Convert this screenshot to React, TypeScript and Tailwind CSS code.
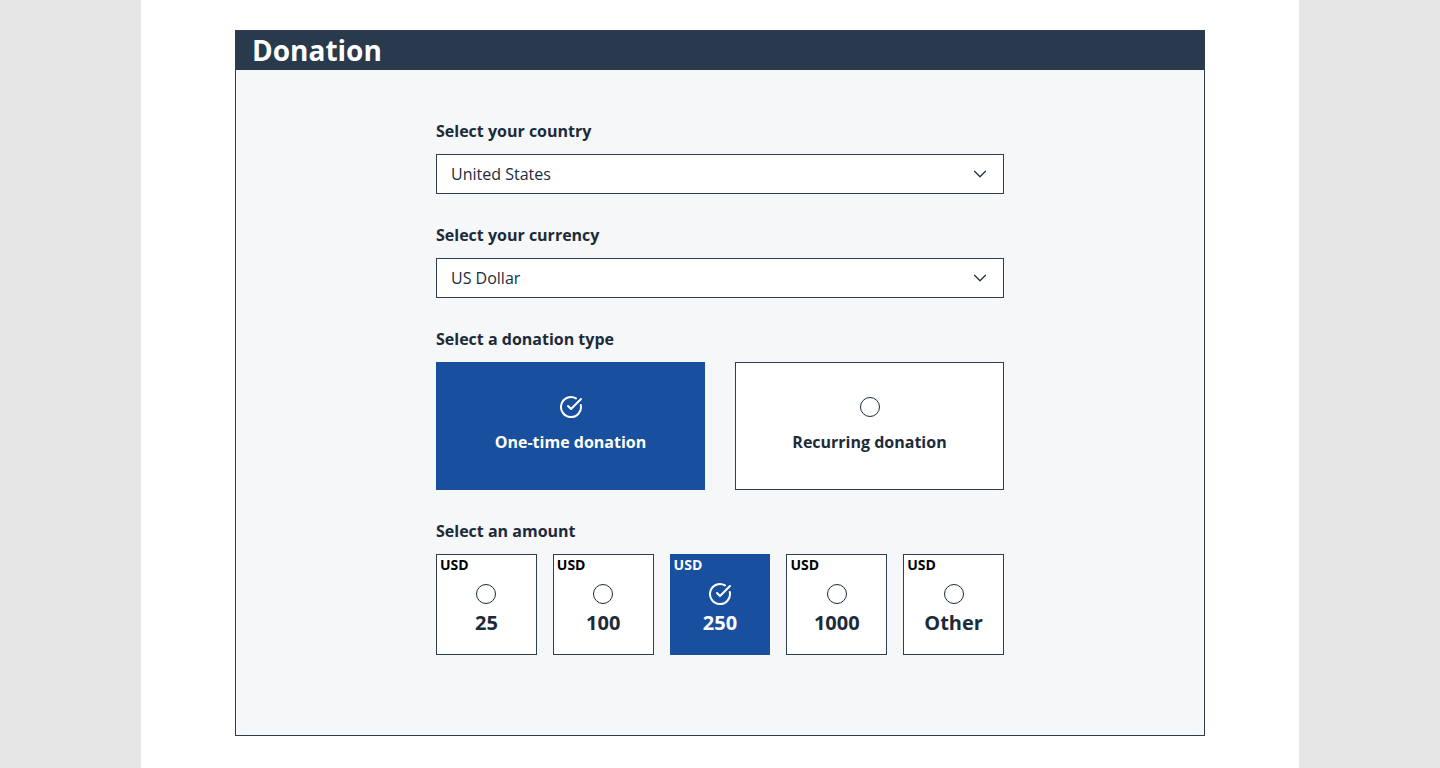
import React from "react";
import { ChevronDown, CircleCheckBig } from "lucide-react";

const amounts = [
  { value: "25", selected: false },
  { value: "100", selected: false },
  { value: "250", selected: true },
  { value: "1000", selected: false },
  { value: "Other", selected: false },
];

function Radio({ selected, size }: { selected: boolean; size: number }) {
  if (selected) {
    return <CircleCheckBig size={size + 4} strokeWidth={2} className="text-white" />;
  }
  return (
    <span
      className="block rounded-full border-[1.5px] border-[#1c2b3a]"
      style={{ width: size, height: size }}
    />
  );
}

function SelectBox({ label, value }: { label: string; value: string }) {
  return (
    <div className="flex flex-col">
      <p className="text-[16px] leading-[24px] font-bold text-[#1c2b3a] mb-[11px]">{label}</p>
      <div className="h-[40px] flex items-center justify-between bg-white border border-[#2e3e4e] pl-[14px] pr-[12px]">
        <span className="text-[16px] text-[#1c2b3a]">{value}</span>
        <ChevronDown size={22} strokeWidth={1.3} className="text-[#1c2b3a]" />
      </div>
    </div>
  );
}

export default function App() {
  return (
    <div className="min-h-[768px] w-full bg-[#e6e6e7] flex justify-center font-['Open_Sans',sans-serif]">
      <div className="w-[1158px] bg-white pt-[30px] pb-[32px] flex justify-center">
        <div className="w-[970px] h-[706px] border border-[#2e3e4e] flex flex-col">
          <div className="h-[39px] bg-[#283a4b] flex items-center px-[16px] pb-[1px]">
            <h1 className="text-[28px] font-bold text-white leading-none">Donation</h1>
          </div>
          <div className="flex-1 bg-[#f6f7f9] flex justify-center pt-[49px]">
            <div className="w-[568px] flex flex-col gap-[29px]">
              <SelectBox label="Select your country" value="United States" />
              <SelectBox label="Select your currency" value="US Dollar" />

              <div className="flex flex-col">
                <p className="text-[16px] leading-[24px] font-bold text-[#1c2b3a] mb-[11px]">Select a donation type</p>
                <div className="flex gap-[30px]">
                  <div className="w-[269px] h-[128px] bg-[#184f9e] flex flex-col items-center justify-center gap-[12px] pb-[2px]">
                    <div className="h-[22px] flex items-center">
                      <Radio selected size={20} />
                    </div>
                    <span className="text-[16px] font-bold text-white">One-time donation</span>
                  </div>
                  <div className="w-[269px] h-[128px] bg-white border border-[#2e3e4e] flex flex-col items-center justify-center gap-[12px] pb-[2px]">
                    <div className="h-[22px] flex items-center">
                      <Radio selected={false} size={20} />
                    </div>
                    <span className="text-[16px] font-bold text-[#1c2b3a]">Recurring donation</span>
                  </div>
                </div>
              </div>

              <div className="flex flex-col">
                <p className="text-[16px] leading-[24px] font-bold text-[#1c2b3a] mb-[11px]">Select an amount</p>
                <div className="flex gap-[16px]">
                  {amounts.map((a) => (
                    <div
                      key={a.value}
                      className={
                        a.selected
                          ? "w-[101px] h-[101px] bg-[#184f9e] flex flex-col px-[4px] pt-[1px]"
                          : "w-[101px] h-[101px] bg-white border border-[#2e3e4e] flex flex-col px-[3px]"
                      }
                    >
                      <span className={a.selected ? "text-[14px] font-bold text-white leading-[20px]" : "text-[14px] font-bold text-black leading-[20px]"}>
                        USD
                      </span>
                      <div className="flex flex-col items-center mt-[8px]">
                        <div className="h-[22px] flex items-center">
                          <Radio selected={a.selected} size={20} />
                        </div>
                        <span
                          className={
                            a.selected
                              ? "text-[20px] font-bold text-white leading-[30px] mt-[3px]"
                              : "text-[20px] font-bold text-[#1c2b3a] leading-[30px] mt-[3px]"
                          }
                        >
                          {a.value}
                        </span>
                      </div>
                    </div>
                  ))}
                </div>
              </div>
            </div>
          </div>
        </div>
      </div>
    </div>
  );
}
